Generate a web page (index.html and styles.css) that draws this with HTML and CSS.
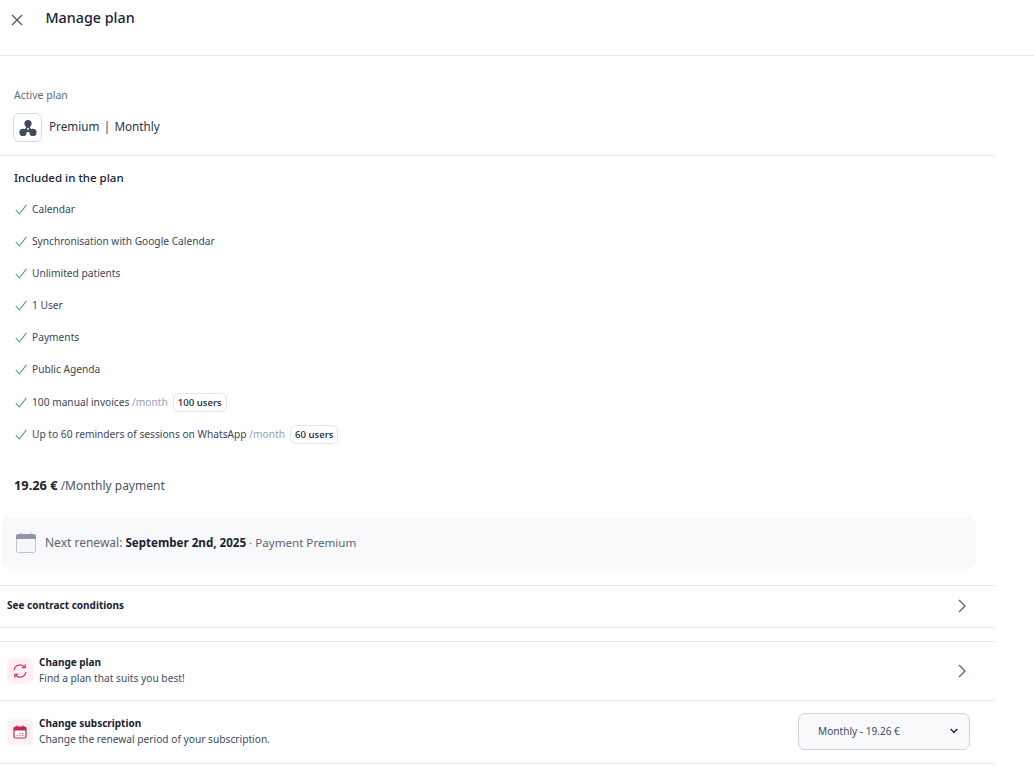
FILE: index.html
```html
<!DOCTYPE html>
<html lang="en">
<head>
<meta charset="utf-8">
<title>Manage plan</title>
<link rel="stylesheet" href="styles.css">
</head>
<body>
<div class="page">
  <header class="topbar">
    <svg class="close" width="12" height="12" viewBox="0 0 12 12"><path d="M1 1l10 10M11 1L1 11" stroke="#4b5563" stroke-width="1.3" fill="none"/></svg>
    <h1 class="title">Manage plan</h1>
  </header>
  <main class="content">
    <section class="active">
      <div class="label">Active plan</div>
      <div class="planrow">
        <span class="planicon"><svg width="18" height="18" viewBox="0 0 18 18"><path d="M9 6L5 12.500h8z" fill="#3f4a5c" stroke="#3f4a5c" stroke-width="1"/><circle cx="9" cy="9.800" r="1" fill="#fff"/><g fill="#3f4a5c"><circle cx="9" cy="4.600" r="3.600"/><circle cx="4" cy="13.400" r="3.600"/><circle cx="14" cy="13.400" r="3.600"/></g></svg></span>
        <span class="planname">Premium<span class="sep">|</span>Monthly</span>
      </div>
    </section>
    <section class="included">
      <h2 class="subtitle">Included in the plan</h2>
      <ul class="features">
        <li class="feature"><svg class="check" width="12" height="11" viewBox="0 0 12 11"><path d="M.8 6l3.600 4L11.400 .8" stroke="#3aa76d" stroke-width="1.100" fill="none"/></svg>Calendar</li>
        <li class="feature"><svg class="check" width="12" height="11" viewBox="0 0 12 11"><path d="M.8 6l3.600 4L11.400 .8" stroke="#3aa76d" stroke-width="1.100" fill="none"/></svg>Synchronisation with Google Calendar</li>
        <li class="feature"><svg class="check" width="12" height="11" viewBox="0 0 12 11"><path d="M.8 6l3.600 4L11.400 .8" stroke="#3aa76d" stroke-width="1.100" fill="none"/></svg>Unlimited patients</li>
        <li class="feature"><svg class="check" width="12" height="11" viewBox="0 0 12 11"><path d="M.8 6l3.600 4L11.400 .8" stroke="#3aa76d" stroke-width="1.100" fill="none"/></svg>1 User</li>
        <li class="feature"><svg class="check" width="12" height="11" viewBox="0 0 12 11"><path d="M.8 6l3.600 4L11.400 .8" stroke="#3aa76d" stroke-width="1.100" fill="none"/></svg>Payments</li>
        <li class="feature"><svg class="check" width="12" height="11" viewBox="0 0 12 11"><path d="M.8 6l3.600 4L11.400 .8" stroke="#3aa76d" stroke-width="1.100" fill="none"/></svg>Public Agenda</li>
        <li class="feature tagged"><svg class="check" width="12" height="11" viewBox="0 0 12 11"><path d="M.8 6l3.600 4L11.400 .8" stroke="#3aa76d" stroke-width="1.100" fill="none"/></svg>100 manual invoices <span class="muted">/month</span><span class="tag">100 users</span></li>
        <li class="feature"><svg class="check" width="12" height="11" viewBox="0 0 12 11"><path d="M.8 6l3.600 4L11.400 .8" stroke="#3aa76d" stroke-width="1.100" fill="none"/></svg>Up to 60 reminders of sessions on WhatsApp <span class="muted">/month</span><span class="tag">60 users</span></li>
      </ul>
      <div class="price"><strong>19.26 €</strong> /Monthly payment</div>
    </section>
    <div class="renewal">
      <svg width="22" height="22" viewBox="0 0 22 22"><rect x="1.500" y="2.500" width="19" height="18" rx="2" fill="#f7f8fb" stroke="#bcc3d1"/><path d="M1 4.500a2.500 2.500 0 0 1 2.500-2.500h15A2.500 2.500 0 0 1 21 4.500V7H1z" fill="#8e97a8"/><path d="M6 .5v2M16 .5v2" stroke="#a3abb9"/><path d="M7 11h1M10.500 11h1M14 11h1M7 14h1M10.500 14h1M14 14h1" stroke="#dfe3ea"/></svg>
      <span class="renewtext"><span class="renewlead">Next renewal:</span> <strong>September 2nd, 2025</strong> · Payment Premium</span>
    </div>
    <div class="row contract">
      <span class="contract-label">See contract conditions</span>
      <svg class="chev" width="8" height="14" viewBox="0 0 8 14"><path d="M1 1l6 6-6 6" stroke="#5b6372" stroke-width="1.3" fill="none"/></svg>
    </div>
    <div class="row option first">
      <span class="opticon"><svg width="16" height="16" viewBox="0 0 16 16" fill="none" stroke="#d6336c" stroke-width="1.2"><path d="M2.200 7a5.800 5.800 0 0 1 10.400-2.800M13.800 9a5.800 5.800 0 0 1-10.400 2.800"/><path d="M13.200 1.300v3.400H9.800M2.800 14.700v-3.400h3.400"/></svg></span>
      <div class="opttext"><div class="opttitle">Change plan</div><div class="optdesc">Find a plan that suits you best!</div></div>
      <svg class="chev" width="8" height="14" viewBox="0 0 8 14"><path d="M1 1l6 6-6 6" stroke="#5b6372" stroke-width="1.3" fill="none"/></svg>
    </div>
    <div class="row option second">
      <span class="opticon"><svg width="14" height="14" viewBox="0 0 14 14"><rect x="1" y="2" width="12" height="11" rx="1.500" fill="#fff" stroke="#c2255c" stroke-width="1.200"/><path d="M1 3.500a1.500 1.500 0 0 1 1.500-1.500h9A1.500 1.500 0 0 1 13 3.500V5.500H1z" fill="#c2255c"/><path d="M4 .6v2M10 .6v2" stroke="#c2255c" stroke-width="1.200"/><path d="M3.500 10.500h1.500M6 10.500h1.500M8.500 10.500h2M6 8.500h1.500M8.500 8.500h2" stroke="#e0709a"/></svg></span>
      <div class="opttext"><div class="opttitle">Change subscription</div><div class="optdesc">Change the renewal period of your subscription.</div></div>
      <div class="select"><span>Monthly - 19.26 €</span><svg width="8" height="6" viewBox="0 0 8 6"><path d="M.7 1l3.300 3.500L7.300 1" stroke="#1f2937" stroke-width="1.500" fill="none"/></svg></div>
    </div>
  </main>
</div>
</body>
</html>
```
FILE: styles.css
```css
* { box-sizing: border-box; }
html, body { margin: 0; padding: 0; background: #fff; }
body { font-family: "Noto Sans", sans-serif; color: #1f2937; height: 773px; overflow: hidden; }
.topbar { height: 56px; border-bottom: 1px solid #e5e7ef; display: flex; align-items: flex-start; }
.close { margin: 14px 0 0 10.500px; flex: none; }
.title { margin: 7px 0 0 23px; font-size: 14.300px; line-height: 21px; font-weight: 500; color: #1a2333; }
.content { width: 995px; }
.active { padding: 32px 0 13px 13px; border-bottom: 1px solid #e5e7ef; }
.label { margin-left: 1px; font-size: 10.500px; line-height: 14px; color: #5a6b85; }
.planrow { display: flex; align-items: center; gap: 7px; margin-top: 11px; }
.planicon { width: 29px; height: 29px; border: 1px solid #d5dae5; border-radius: 6px; display: flex; align-items: center; justify-content: center; }
.planname { padding-bottom: 4px; font-size: 11.700px; color: #2c3648; }
.sep { margin: 0 4.300px; }
.included { padding: 13px 0 0 14px; }
.subtitle { margin: 0; font-size: 11.500px; line-height: 18px; font-weight: 500; color: #1a2333; }
.features { list-style: none; margin: 6px 0 0; padding: 0; }
.feature { height: 32px; display: flex; align-items: center; font-size: 10.200px; color: #3c4657; white-space: pre; }
.tagged { margin-top: 1px; }
.check { margin: 0 5px 0 1px; flex: none; }
.muted { color: #98a1b2; }
.tag { margin-left: 5px; border: 1px solid #e2e5ec; border-radius: 6px; padding: 0 4px; font-size: 9.600px; line-height: 17px; color: #1a2333; font-weight: 500; }
.price { margin-top: 26px; font-size: 12px; line-height: 18px; color: #4a5568; }
.price strong { color: #1a2333; font-weight: 700; font-size: 12.800px; }
.renewal { margin: 22px 19px 0 1px; height: 52px; background: #f8f9fb; border-radius: 8px; padding-left: 14px; display: flex; align-items: center; gap: 8px; }
.renewtext { padding-bottom: 2px; font-size: 11.600px; color: #5b6575; }
.renewlead { font-size: 12px; }
.renewtext strong { color: #1a2333; font-weight: 700; }
.row { display: flex; align-items: center; border-top: 1px solid #e5e7ef; }
.contract { margin-top: 16px; height: 43px; padding: 0 29px 2px 7px; justify-content: space-between; border-bottom: 1px solid #e5e7ef; }
.contract-label { padding-bottom: 2px; font-size: 10px; font-weight: 700; color: #1a2333; }
.option { padding: 0 25px 0 7px; gap: 6px; }
.first { margin-top: 13px; height: 59px; padding-right: 29px; }
.second { height: 64px; border-bottom: 1px solid #e5e7ef; }
.opticon { width: 26px; height: 26px; background: #fff0f5; border-radius: 6px; display: flex; align-items: center; justify-content: center; flex: none; }
.opttext { flex: 1; font-size: 10.200px; line-height: 16px; padding-bottom: 2px; }
.opttitle { font-weight: 700; color: #1a2333; font-size: 10px; }
.optdesc { color: #3c4b63; }
.select { width: 172px; height: 37px; margin-bottom: 2px; background: #f8f9fb; border: 1px solid #cdd3df; border-radius: 7px; padding: 0 11px 0 19px; display: flex; align-items: center; justify-content: space-between; font-size: 10.100px; color: #3c4b63; }
```
